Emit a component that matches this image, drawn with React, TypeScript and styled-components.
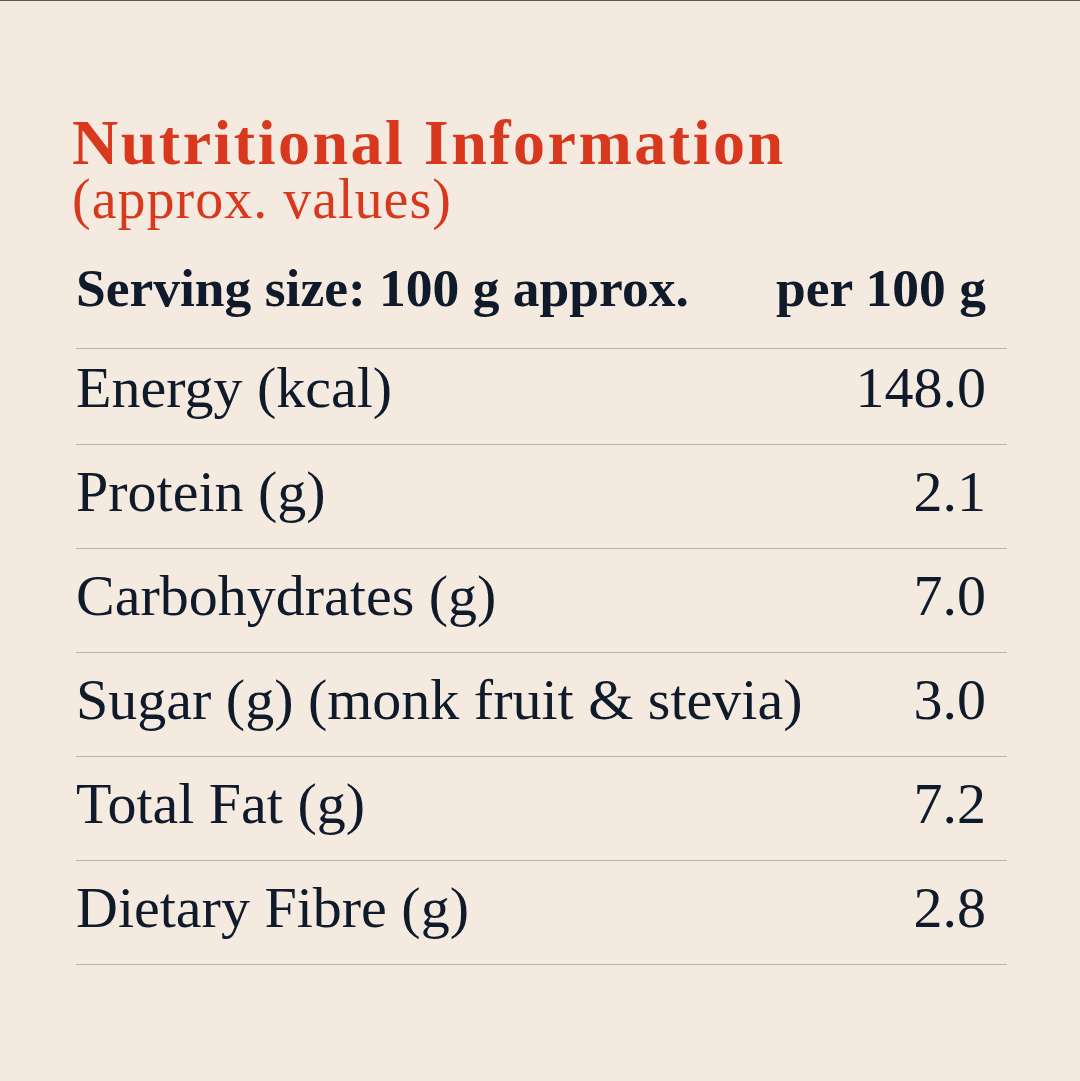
import React from "react";
import styled, { createGlobalStyle } from "styled-components";

const GlobalStyle = createGlobalStyle`
  html, body {
    margin: 0;
    padding: 0;
    background: #f5eae0;
  }
  body {
    font-family: "Liberation Serif", "Times New Roman", serif;
  }
`;

const Page = styled.main`
  box-sizing: border-box;
  width: 1080px;
  height: 1081px;
  background: #f5eae0;
  border-top: 1px solid #5f5955;
  padding: 111px 73px 0 76px;
  color: #0f1a2b;
`;

const Heading = styled.header`
  margin-left: -4px;
  color: #d8391e;
`;

const Title = styled.h1`
  margin: 0;
  font-size: 64px;
  line-height: 62px;
  font-weight: 700;
  letter-spacing: 2.5px;
`;

const Subtitle = styled.p`
  margin: 0;
  font-size: 56px;
  line-height: 50px;
  font-weight: 400;
  letter-spacing: 1px;
`;

const Table = styled.section`
  margin-top: 38px;
  display: flex;
  flex-direction: column;
`;

const Row = styled.div<{ $head?: boolean; $first?: boolean }>`
  display: flex;
  justify-content: space-between;
  align-items: baseline;
  border-bottom: 1px solid #bab4ad;
  padding: ${(p) => (p.$head ? "0 21px 33px 0" : p.$first ? "10px 21px 27px 0" : "18px 21px 27px 0")};
  font-size: ${(p) => (p.$head ? "53.5px" : "58px")};
  line-height: ${(p) => (p.$head ? "53px" : "58px")};
  font-weight: ${(p) => (p.$head ? 700 : 400)};
`;

const Label = styled.span``;
const Value = styled.span`
  text-align: right;
`;

const rows: [string, string][] = [
  ["Energy (kcal)", "148.0"],
  ["Protein (g)", "2.1"],
  ["Carbohydrates (g)", "7.0"],
  ["Sugar (g) (monk fruit & stevia)", "3.0"],
  ["Total Fat (g)", "7.2"],
  ["Dietary Fibre (g)", "2.8"],
];

export default function App() {
  return (
    <>
      <GlobalStyle />
      <Page>
        <Heading>
          <Title>Nutritional Information</Title>
          <Subtitle>(approx. values)</Subtitle>
        </Heading>
        <Table>
          <Row $head>
            <Label>Serving size: 100 g approx.</Label>
            <Value>per 100 g</Value>
          </Row>
          {rows.map(([label, value], i) => (
            <Row key={label} $first={i === 0}>
              <Label>{label}</Label>
              <Value>{value}</Value>
            </Row>
          ))}
        </Table>
      </Page>
    </>
  );
}
